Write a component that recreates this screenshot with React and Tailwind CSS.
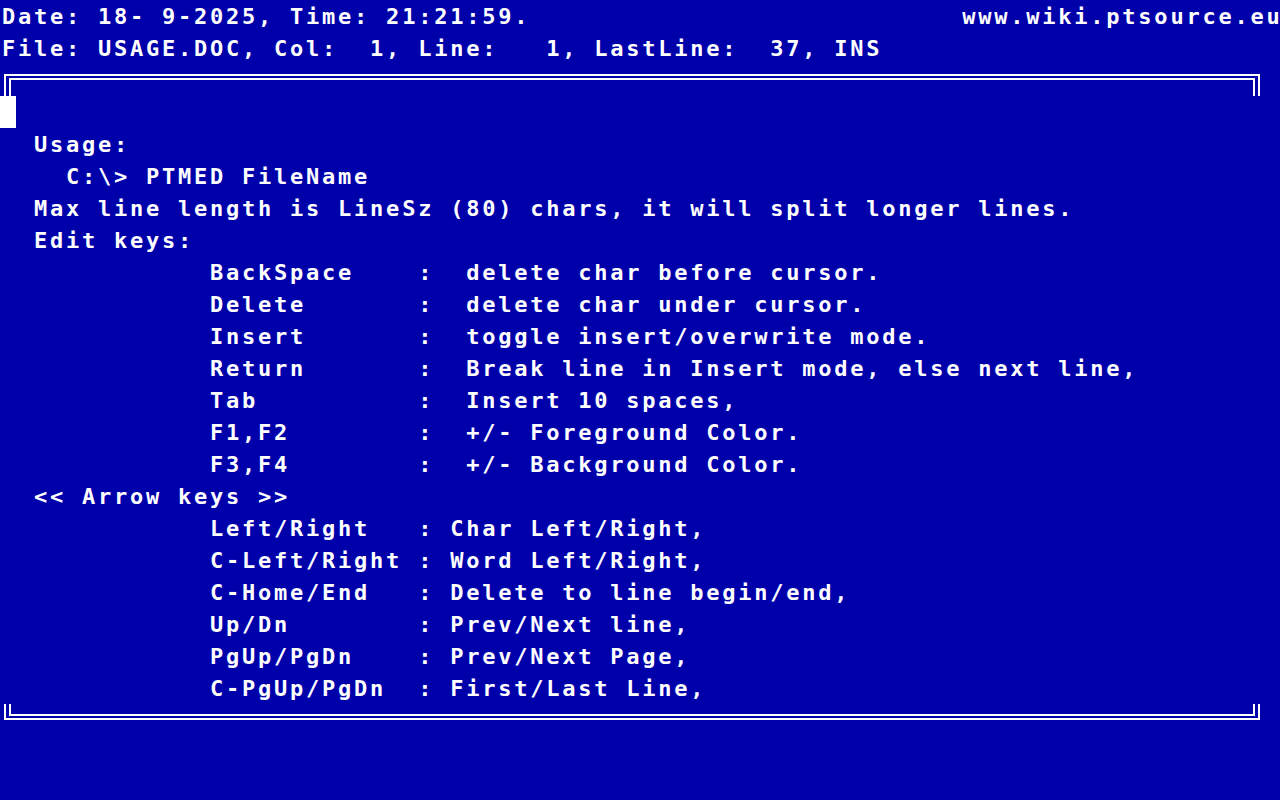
import React from 'react';

const EDIT_KEYS = [
  ['BackSpace', 'delete char before cursor.'],
  ['Delete', 'delete char under cursor.'],
  ['Insert', 'toggle insert/overwrite mode.'],
  ['Return', 'Break line in Insert mode, else next line,'],
  ['Tab', 'Insert 10 spaces,'],
  ['F1,F2', '+/- Foreground Color.'],
  ['F3,F4', '+/- Background Color.'],
];

const ARROW_KEYS = [
  ['Left/Right', 'Char Left/Right,'],
  ['C-Left/Right', 'Word Left/Right,'],
  ['C-Home/End', 'Delete to line begin/end,'],
  ['Up/Dn', 'Prev/Next line,'],
  ['PgUp/PgDn', 'Prev/Next Page,'],
  ['C-PgUp/PgDn', 'First/Last Line,'],
];

const indent = ' '.repeat(13);

// text lines inside the frame (rows 4..21)
const BODY = [
  '  Usage:',
  '    C:\\> PTMED FileName',
  '  Max line length is LineSz (80) chars, it will split longer lines.',
  '  Edit keys:',
  ...EDIT_KEYS.map(([k, d]) => indent + k.padEnd(13) + ':  ' + d),
  '  << Arrow keys >>',
  ...ARROW_KEYS.map(([k, d]) => indent + k.padEnd(13) + ': ' + d),
];

function Row({ children }) {
  return <div className="h-8 pl-[2px] leading-[34px] whitespace-pre">{children}</div>;
}

// double-line box edge, drawn like the ╔═╗ / ╚═╝ characters
function FrameTop() {
  return (
    <svg width="1280" height="32" className="block">
      <rect x="4" y="10" width="1256" height="2" fill="#fff" />
      <rect x="9" y="14" width="1246" height="2" fill="#fff" />
      <rect x="4" y="10" width="2" height="22" fill="#fff" />
      <rect x="9" y="14" width="2" height="18" fill="#fff" />
      <rect x="1258" y="10" width="2" height="22" fill="#fff" />
      <rect x="1253" y="14" width="2" height="18" fill="#fff" />
    </svg>
  );
}

function FrameBottom() {
  return (
    <svg width="1280" height="32" className="block">
      <rect x="4" y="0" width="2" height="16" fill="#fff" />
      <rect x="9" y="0" width="2" height="12" fill="#fff" />
      <rect x="1258" y="0" width="2" height="16" fill="#fff" />
      <rect x="1253" y="0" width="2" height="12" fill="#fff" />
      <rect x="9" y="10" width="1246" height="2" fill="#fff" />
      <rect x="4" y="14" width="1256" height="2" fill="#fff" />
    </svg>
  );
}

export default function App() {
  return (
    <div className="w-[1280px] h-[800px] overflow-hidden bg-[#0000aa] text-white font-['DejaVu_Sans_Mono','Liberation_Mono',monospace] font-bold text-[22px] tracking-[2.76px]">
      <Row>
        {'Date: 18- 9-2025, Time: 21:21:59.'.padEnd(60)}
        {'www.wiki.ptsource.e'}
        <span className="tracking-normal">u</span>
      </Row>
      <Row>File: USAGE.DOC, Col:  1, Line:   1, LastLine:  37, INS</Row>
      <FrameTop />
      <div className="h-8">
        <div className="w-4 h-8 bg-white" />
      </div>
      {BODY.map((line, i) => (
        <Row key={i}>{line}</Row>
      ))}
      <FrameBottom />
    </div>
  );
}
